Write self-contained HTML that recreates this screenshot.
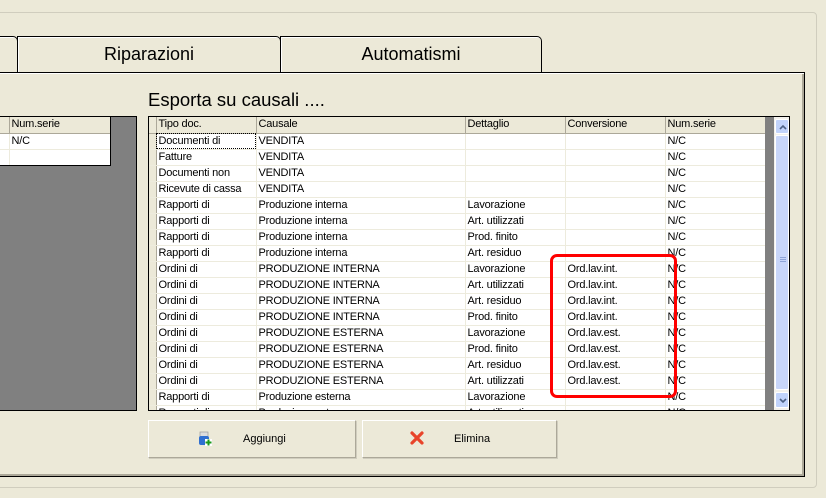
<!DOCTYPE html>
<html><head><meta charset="utf-8"><style>
*{margin:0;padding:0;box-sizing:border-box}
body{width:826px;height:498px;background:#ECE9D8;position:relative;overflow:hidden;font-family:"Liberation Sans",sans-serif;font-size:11px;color:#000}
.a{position:absolute}
.grp{left:-5px;top:12px;width:822px;height:476px;border:1px solid #D0CDBE;border-radius:4px}
.tab{top:36px;height:37px;border:1px solid #000;border-bottom:none;border-radius:0 5px 0 0;background:#ECE9D8;font-size:18px;text-align:center;line-height:34px;box-shadow:inset 1px 1px 0 #fff}
.panel{left:-2px;top:72px;width:807px;height:405px;border:1px solid #000;box-shadow:inset 1px 1px 0 #fff,inset -2px -2px 0 #ACA899}
table{border-collapse:collapse;table-layout:fixed}
td{height:16px;border-right:1px solid #EDEBDD;border-bottom:1px solid #EDEBDD;padding:0 0 0 2px;white-space:nowrap;overflow:hidden;background:#fff;line-height:15px;letter-spacing:-0.2px}
tr.h td{background:#ECE9D8;border-right:1px solid #ACA899;border-bottom:1px solid #ACA899;height:16px}
td.i{background:#ECE9D8;border-right:1px solid #ACA899;padding:0}
.btn{top:420px;height:38px;background:#ECE9D8;border:1px solid #fff;border-right-color:#ACA899;border-bottom-color:#ACA899;box-shadow:1px 1px 0 #D0CDBE;font-size:11px;line-height:36px}
</style></head><body>
<div class="a grp"></div>
<div class="a tab" style="left:-30px;width:48px"></div>
<div class="a tab" style="left:17px;width:264px">Riparazioni</div>
<div class="a tab" style="left:280px;width:262px">Automatismi</div>
<div class="a panel"></div>
<div class="a" style="left:148px;top:89px;font-size:18.5px">Esporta su causali ....</div>

<div class="a" style="left:0;top:116px;width:137px;height:295px;background:#808080;border:1px solid #000;border-left:none"></div>
<div class="a" style="left:0;top:116px;width:111px;height:50px;border:1px solid #000;border-left:none;background:#fff;overflow:hidden">
<table style="width:110px"><col style="width:9px"><col style="width:101px">
<tr class="h"><td class="i" style="border-bottom:1px solid #ACA899"></td><td>Num.serie</td></tr>
<tr><td></td><td>N/C</td></tr><tr><td></td><td></td></tr></table></div>

<div class="a" style="left:148px;top:116px;width:642px;height:295px;border:1px solid #000;background:#fff;overflow:hidden">
<table style="width:617px"><col style="width:7px"><col style="width:100px"><col style="width:209px"><col style="width:100px"><col style="width:100px"><col style="width:101px">
<tr class="h"><td class="i"></td><td>Tipo doc.</td><td>Causale</td><td>Dettaglio</td><td>Conversione</td><td>Num.serie</td></tr>
<tr><td class="i"></td><td style="outline:1px dotted #000;outline-offset:-1px">Documenti di</td><td>VENDITA</td><td></td><td></td><td>N/C</td></tr>
<tr><td class="i"></td><td>Fatture</td><td>VENDITA</td><td></td><td></td><td>N/C</td></tr>
<tr><td class="i"></td><td>Documenti non</td><td>VENDITA</td><td></td><td></td><td>N/C</td></tr>
<tr><td class="i"></td><td>Ricevute di cassa</td><td>VENDITA</td><td></td><td></td><td>N/C</td></tr>
<tr><td class="i"></td><td>Rapporti di</td><td>Produzione interna</td><td>Lavorazione</td><td></td><td>N/C</td></tr>
<tr><td class="i"></td><td>Rapporti di</td><td>Produzione interna</td><td>Art. utilizzati</td><td></td><td>N/C</td></tr>
<tr><td class="i"></td><td>Rapporti di</td><td>Produzione interna</td><td>Prod. finito</td><td></td><td>N/C</td></tr>
<tr><td class="i"></td><td>Rapporti di</td><td>Produzione interna</td><td>Art. residuo</td><td></td><td>N/C</td></tr>
<tr><td class="i"></td><td>Ordini di</td><td>PRODUZIONE INTERNA</td><td>Lavorazione</td><td>Ord.lav.int.</td><td>N/C</td></tr>
<tr><td class="i"></td><td>Ordini di</td><td>PRODUZIONE INTERNA</td><td>Art. utilizzati</td><td>Ord.lav.int.</td><td>N/C</td></tr>
<tr><td class="i"></td><td>Ordini di</td><td>PRODUZIONE INTERNA</td><td>Art. residuo</td><td>Ord.lav.int.</td><td>N/C</td></tr>
<tr><td class="i"></td><td>Ordini di</td><td>PRODUZIONE INTERNA</td><td>Prod. finito</td><td>Ord.lav.int.</td><td>N/C</td></tr>
<tr><td class="i"></td><td>Ordini di</td><td>PRODUZIONE ESTERNA</td><td>Lavorazione</td><td>Ord.lav.est.</td><td>N/C</td></tr>
<tr><td class="i"></td><td>Ordini di</td><td>PRODUZIONE ESTERNA</td><td>Prod. finito</td><td>Ord.lav.est.</td><td>N/C</td></tr>
<tr><td class="i"></td><td>Ordini di</td><td>PRODUZIONE ESTERNA</td><td>Art. residuo</td><td>Ord.lav.est.</td><td>N/C</td></tr>
<tr><td class="i"></td><td>Ordini di</td><td>PRODUZIONE ESTERNA</td><td>Art. utilizzati</td><td>Ord.lav.est.</td><td>N/C</td></tr>
<tr><td class="i"></td><td>Rapporti di</td><td>Produzione esterna</td><td>Lavorazione</td><td></td><td>N/C</td></tr>
<tr><td class="i"></td><td>Rapporti di</td><td>Produzione esterna</td><td>Art. utilizzati</td><td></td><td>N/C</td></tr>
</table>
<div class="a" style="left:616px;top:0;width:9px;height:295px;background:#808080"></div>
<div class="a" style="left:625px;top:0;width:16px;height:295px;background:#F3F1EC"></div>
<div class="a" style="left:626px;top:2px;width:14px;height:15px;background:#C1D3FB;border:1px solid #fff;border-radius:2px"><svg class="a" style="left:3px;top:4px" width="8" height="6"><path d="M1 5L4 2L7 5" stroke="#4D6185" stroke-width="1.6" fill="none"/></svg></div>
<div class="a" style="left:626px;top:18px;width:14px;height:255px;background:#C8D6FA;border:1px solid #fff;border-radius:2px"><svg class="a" style="left:3px;top:120px" width="8" height="8"><path d="M1 1.5H7M1 3.5H7M1 5.5H7" stroke="#8EA4D8"/></svg></div>
<div class="a" style="left:626px;top:275px;width:14px;height:16px;background:#C1D3FB;border:1px solid #fff;border-radius:2px"><svg class="a" style="left:3px;top:5px" width="8" height="6"><path d="M1 1L4 4L7 1" stroke="#4D6185" stroke-width="1.6" fill="none"/></svg></div>
</div>

<div class="a" style="left:550px;top:254px;width:127px;height:144px;border:3px solid #F00;border-radius:7px"></div>

<div class="a btn" style="left:148px;width:208px">
<svg class="a" style="left:48px;top:10px" width="16" height="16" viewBox="0 0 16 16"><rect x="3" y="1" width="8" height="5" fill="#ddd" stroke="#999" stroke-width=".7"/><rect x="2" y="5" width="10" height="9" rx="2" fill="#2F6FD0"/><rect x="8" y="8" width="7" height="7" fill="#fff"/><path d="M11.5 8.5v6M8.5 11.5h6" stroke="#1A9A1A" stroke-width="2"/></svg>
<span class="a" style="left:94px;top:0">Aggiungi</span></div>
<div class="a btn" style="left:362px;width:195px">
<svg class="a" style="left:47px;top:10px" width="14" height="14" viewBox="0 0 14 14"><path d="M2 2L12 12M12 2L2 12" stroke="#E8442A" stroke-width="3.2" stroke-linecap="round"/></svg>
<span class="a" style="left:91px;top:0">Elimina</span></div>
</body></html>
